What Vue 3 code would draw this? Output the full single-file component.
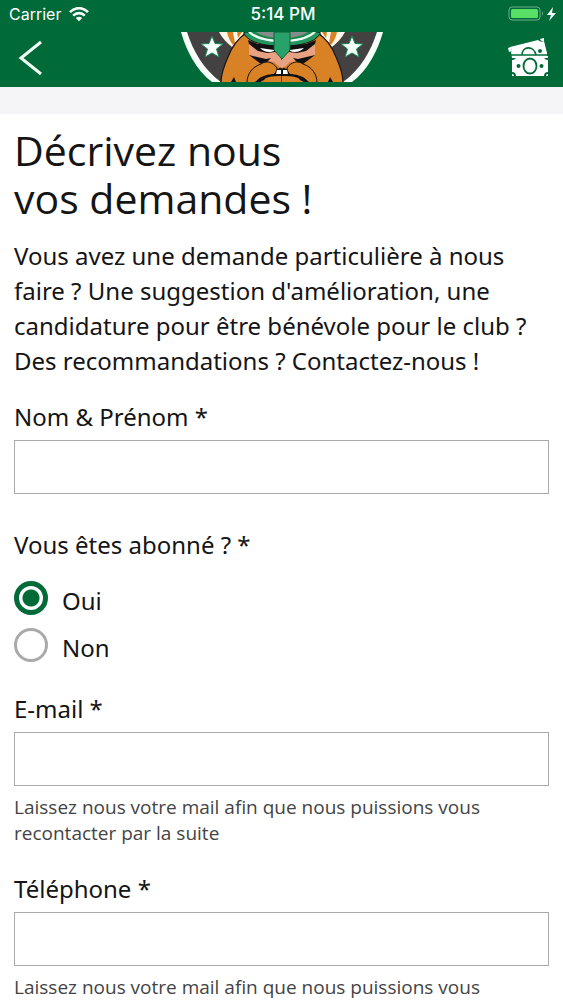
<script setup>
import { ref } from 'vue'
const subscriber = ref('oui')
const name = ref('')
const email = ref('')
const phone = ref('')
</script>

<template>
  <div class="app">
    <header class="top">
      <div class="status">
        <span class="carrier">Carrier
          <svg width="20" height="15" viewBox="0 0 20 15" fill="none" stroke="#fff" stroke-width="2.6" aria-hidden="true">
            <path d="M1 5.2C6-.2 14-.2 19 5.2M4.2 8.6c3.400-3.300 8.200-3.300 11.600 0" />
            <path d="M10 14.200L6.800 11.100c1.800-1.700 4.600-1.700 6.400 0z" fill="#fff" stroke="none" />
          </svg>
        </span>
        <span class="time">5:14 PM</span>
        <span class="battery">
          <svg width="49" height="16" viewBox="0 0 49 16" aria-hidden="true">
            <rect x="1" y="1" width="31" height="13" rx="3" fill="none" stroke="#70ae86" />
            <rect x="3" y="3" width="27" height="9" rx="1.500" fill="#57df66" />
            <path d="M34 5q2 2.500 0 5z" fill="#70ae86" />
            <path d="M45 1l-6 8h4l-2 6 7-8h-4z" fill="#fff" />
          </svg>
        </span>
      </div>
      <nav class="nav">
        <button class="icon-button" type="button" aria-label="Retour">
          <svg width="42" height="38" viewBox="0 0 42 38" fill="none" stroke="#f4fff6" stroke-width="3" aria-hidden="true"><path d="M27 4L7 20l20 16" /></svg>
        </button>
        <svg class="crest" width="202" height="50" viewBox="0 0 202 50" aria-hidden="true">
          <path d="M0 0h202c-5 18-15 38-31 50H31C15 38 5 18 0 0z" fill="#f7fff8" />
          <path d="M6 0h190c-6 19-17 38-34 50H40C23 38 12 19 6 0z" fill="#444143" />
          <g id="half">
            <path d="M31 4l3 7.500 8 .5-6.500 5 2.500 8-7-4-7 4 2.500-8-6.500-5 8-.5z" fill="#f5fff8" stroke="#168753" stroke-width="1" />
            <path d="M38 0h26L51 15C46 11 41 6 38 0z" fill="#fff6e8" />
            <path d="M46 0h6l2 11-2 2C49 9 47 5 46 0zm10 0h5l-4 6z" fill="#d88125" />
            <path d="M64 2C56 7 51 15 47 25c-5 11-7 18-7 26h61V2z" fill="#d88125" stroke="#151414" stroke-width="1.200" />
            <path d="M68 10l33 3v24l-8-7-8-1-17-6z" fill="#e9a184" />
            <path d="M67 8l10 4 24 1v9l-7-2-8 1-9-2-9-7z" fill="#111" />
            <path d="M79 16l14 2v1c-5 2-10 1-14-3z" fill="#fff" />
            <path d="M68 23l17 4 5-1-5 5-5 1z" fill="#111" />
            <path d="M63 0h38v14C83 14 69 11 63 2z" fill="#229760" stroke="#111" stroke-width="1" />
            <path d="M67 0h34v10C86 10 73 7 67 0z" fill="#effff3" />
            <path d="M70 0h31v8C88 8 76 5 70 0z" fill="#18884f" />
            <path d="M75 0h26v6C90 6 81 4 75 0z" fill="#858b87" />
            <path d="M92 39l9-4v10H85z" fill="#111" />
            <path d="M96 36c-4-6-11-8-16-4-9 3-14 10-14 19h13c1-4 5-6 11-7 3-1 6-4 6-8z" fill="#d88125" stroke="#111" stroke-width="1" />
            <path d="M75 50c4-6 10-7 16-8h10v9H75z" fill="#111" />
            <path d="M79 50c4-5 11-6 22-6v6z" fill="#d88125" />
            <path d="M79 46l7-2-3 4-4 2h-5z" fill="#111" />
            <path d="M96 38h4v4h-5z" fill="#fff" />
            <path d="M50 50l3-5 2 5z" fill="#111" />
          </g>
          <use href="#half" transform="translate(202 0) scale(-1 1)" />
          <path d="M95 28h12l-6 9z" fill="#e9a184" />
          <path d="M93 0h16v18l-8 9-8-9z" fill="#28a16b" stroke="#0d6037" />
        </svg>
        <button class="icon-button" type="button" aria-label="Billets">
          <svg width="42" height="38" viewBox="0 0 42 38" aria-hidden="true">
            <path d="M3 9L31 2q3 3 6 1l3 12v5H5l-1-6q2-2-1-5z" fill="#fff" />
            <path d="M1 10l3-1 1 4-3 1zM33 1l4-1v3q-3 1-4-2z" fill="#fff" />
            <g fill="none" stroke="#006b38" stroke-width="1.600">
              <path d="M4 17h37" />
              <path d="M15 17c0-9 12-10 14 0" />
            </g>
            <circle cx="33" cy="13" r="2" fill="#006b38" />
            <path d="M9 18h28q0 4 4 4v12q-4 0-4 4H9q0-4-4-4V22q4 0 4-4z" fill="#fff" />
            <path d="M5 18h2q0 2-2 2zm34 0h2v2q-2 0-2-2zM5 36q2 0 2 2H5zm34 2q0-2 2-2v2z" fill="#fff" />
            <ellipse cx="23" cy="28" rx="6.500" ry="7.500" fill="none" stroke="#006b38" stroke-width="1.800" />
            <circle cx="11.500" cy="28" r="2" fill="#006b38" />
            <circle cx="34.500" cy="28" r="2" fill="#006b38" />
          </svg>
        </button>
      </nav>
    </header>
    <div class="band"></div>
    <main class="content">
      <h1>Décrivez nous<br>vos demandes !</h1>
      <p class="intro">Vous avez une demande particulière à nous faire ? Une suggestion d'amélioration, une candidature pour être bénévole pour le club ? Des recommandations ? Contactez-nous !</p>
      <form @submit.prevent>
        <div class="field">
          <label for="name">Nom &amp; Prénom *</label>
          <input id="name" v-model="name" class="text" type="text">
        </div>
        <fieldset>
          <legend>Vous êtes abonné ? *</legend>
          <label class="choice"><input v-model="subscriber" type="radio" name="subscriber" value="oui"><span>Oui</span></label>
          <label class="choice"><input v-model="subscriber" type="radio" name="subscriber" value="non"><span>Non</span></label>
        </fieldset>
        <div class="field">
          <label for="email">E-mail *</label>
          <input id="email" v-model="email" class="text" type="email" aria-describedby="email-help">
          <p id="email-help" class="help">Laissez nous votre mail afin que nous puissions vous recontacter par la suite</p>
        </div>
        <div class="field">
          <label for="phone">Téléphone *</label>
          <input id="phone" v-model="phone" class="text" type="tel" aria-describedby="phone-help">
          <p id="phone-help" class="help">Laissez nous votre mail afin que nous puissions vous recontacter par la suite</p>
        </div>
      </form>
    </main>
  </div>
</template>

<style>
body { margin: 0; background: #fff; }
</style>

<style scoped>
* { box-sizing: border-box; }
.app { height: 100vh; overflow-y: auto; scrollbar-width: none; color: #151515; font-family: "Noto Sans", "Open Sans", sans-serif; font-size: 24px; }
.top { background: #006b38; color: #fff; padding-bottom: 1px; }
.status { display: grid; grid-template-columns: 1fr auto 1fr; align-items: center; height: 28px; padding: 0 6px 0 9px; font: 16px/28px Inter, sans-serif; }
.carrier { display: flex; align-items: center; gap: 8px; }
.time { font-size: 17px; font-weight: 500; }
.battery { display: flex; justify-content: flex-end; }
.nav { display: flex; justify-content: space-between; align-items: center; height: 58px; padding: 0 14px; }
.icon-button { display: flex; padding: 0; border: 0; background: none; width: 42px; }
.crest { display: block; }
.band { height: 27px; background: #f5f4f6; }
.content { padding: 12px 14px; }
h1 { margin: 0; font: 400 41px/48px "Open Sans", sans-serif; }
.intro { margin: 16px 0 0; line-height: 35px; }
form { margin-top: 22px; }
.field label, legend { display: block; line-height: 34px; padding: 0; }
.text { display: block; width: 100%; height: 54px; margin-top: 6px; padding: 8px 12px; border: 1px solid #aaa; border-radius: 0; background: #fff; font: inherit; }
fieldset { margin: 34px 0 24px; padding: 0; border: 0; min-width: 0; }
legend { margin-bottom: 12px; }
.choice { display: flex; align-items: center; gap: 14px; height: 47px; }
.choice span { padding-top: 6px; }
.choice input { appearance: none; width: 34px; height: 34px; margin: 0; border: 3px solid #aaa; border-radius: 50%; }
.choice input:checked { border: 5px solid #006b38; background: radial-gradient(circle, #006b38 0 8px, #fff 9px); }
.help { margin: 8px 0 0; color: #444; font-family: "Open Sans", "Noto Sans", sans-serif; font-size: 19px; line-height: 26px; }
.field + .field { margin-top: 26px; }
</style>
